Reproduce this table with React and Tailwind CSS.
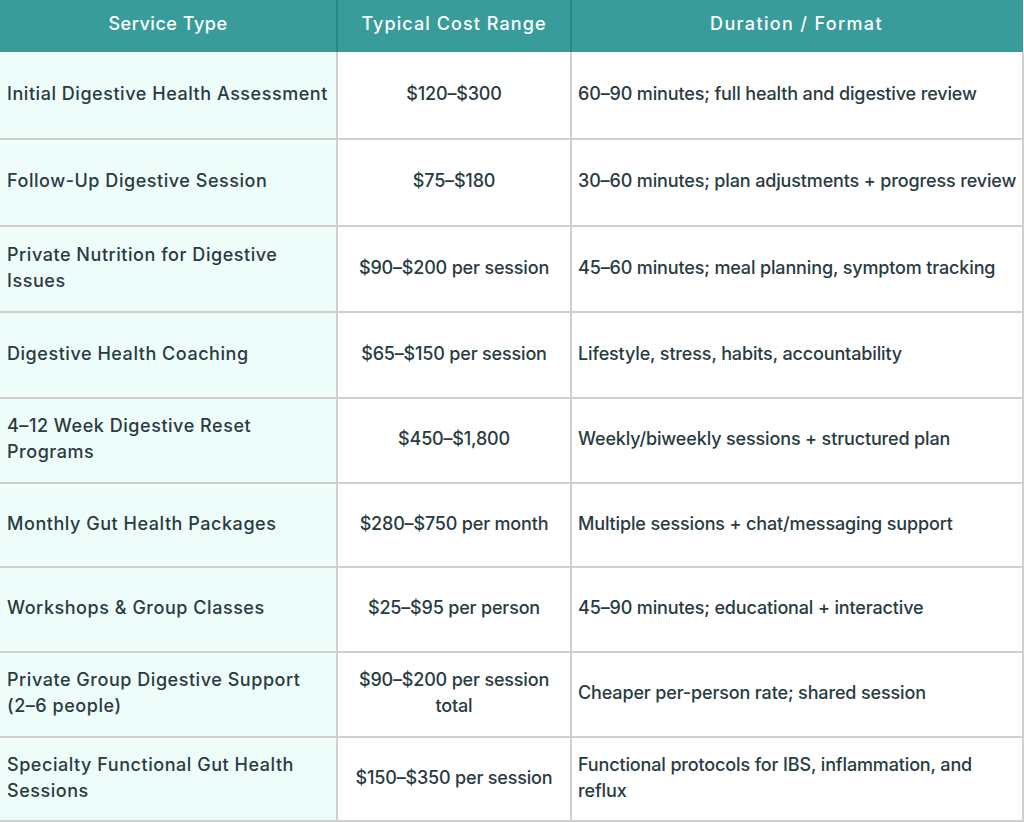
const rows = [
  { name: "Initial Digestive Health Assessment", cost: "$120–$300", format: "60–90 minutes; full health and digestive review", h: "h-[87px]" },
  { name: "Follow-Up Digestive Session", cost: "$75–$180", format: "30–60 minutes; plan adjustments + progress review", h: "h-[87px]" },
  { name: "Private Nutrition for Digestive Issues", cost: "$90–$200 per session", format: "45–60 minutes; meal planning, symptom tracking", h: "h-[86px]" },
  { name: "Digestive Health Coaching", cost: "$65–$150 per session", format: "Lifestyle, stress, habits, accountability", h: "h-[86px]" },
  { name: "4–12 Week Digestive Reset Programs", cost: "$450–$1,800", format: "Weekly/biweekly sessions + structured plan", h: "h-[85px]" },
  { name: "Monthly Gut Health Packages", cost: "$280–$750 per month", format: "Multiple sessions + chat/messaging support", h: "h-[84px]" },
  { name: "Workshops & Group Classes", cost: "$25–$95 per person", format: "45–90 minutes; educational + interactive", h: "h-[85px]" },
  { name: "Private Group Digestive Support (2–6 people)", cost: "$90–$200 per session total", format: "Cheaper per-person rate; shared session", h: "h-[85px]" },
  { name: "Specialty Functional Gut Health Sessions", cost: "$150–$350 per session", format: "Functional protocols for IBS, inflammation, and reflux", h: "h-[84px]" },
];

export default function App() {
  return (
    <div className="w-[1024px] h-[822px] bg-white overflow-hidden font-['Inter',sans-serif] text-[#283b42]">
      <table className="w-[1024px] border-collapse table-fixed text-[18px] font-medium leading-[26px]">
        <colgroup>
          <col className="w-[337px]" />
          <col className="w-[234px]" />
          <col />
        </colgroup>
        <thead>
          <tr className="h-[52px] bg-[#379c9a] text-white">
            <th className="font-medium pb-1 tracking-[0.03em] border-r-2 border-[#2c8683]">Service Type</th>
            <th className="font-medium pb-1 tracking-[0.06em] border-r-2 border-[#2c8683]">Typical Cost Range</th>
            <th className="font-medium pb-1 pr-[2px] tracking-[0.075em]">Duration / Format</th>
          </tr>
        </thead>
        <tbody>
          {rows.map((r) => (
            <tr key={r.name} className={`${r.h} border-b-2 border-[#cfcfcf]`}>
              <td className="bg-[#effdfa] pl-[7px] pr-2 pb-[3px] tracking-[0.03em] border-r-2 border-[#cfcfcf]">{r.name}</td>
              <td className="text-center px-2 pb-[3px] tracking-[-0.01em] border-r-2 border-[#cfcfcf]">{r.cost}</td>
              <td className="pl-[6px] pr-0 pb-[3px] tracking-[-0.008em] border-r-2 border-[#cfcfcf]">{r.format}</td>
            </tr>
          ))}
        </tbody>
      </table>
    </div>
  );
}
